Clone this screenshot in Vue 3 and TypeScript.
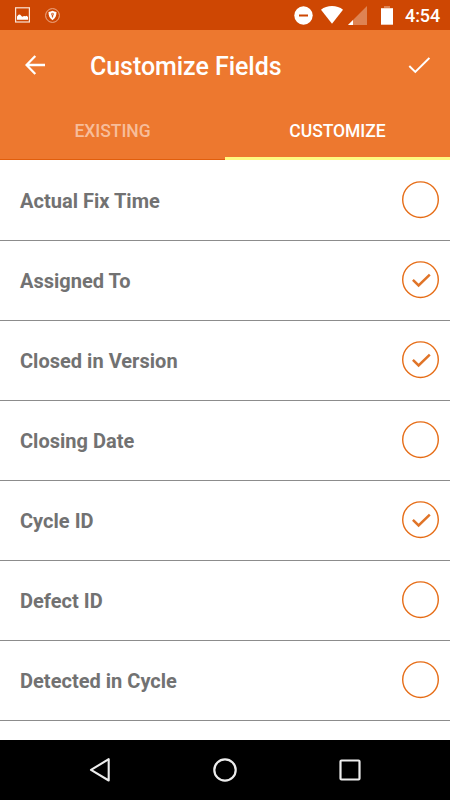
<script setup lang="ts">
import { ref } from 'vue'

interface Field {
  name: string
  checked: boolean
}

const tabs: string[] = ['EXISTING', 'CUSTOMIZE']
const activeTab = ref(1)

const fields = ref<Field[]>([
  { name: 'Actual Fix Time', checked: false },
  { name: 'Assigned To', checked: true },
  { name: 'Closed in Version', checked: true },
  { name: 'Closing Date', checked: false },
  { name: 'Cycle ID', checked: true },
  { name: 'Defect ID', checked: false },
  { name: 'Detected in Cycle', checked: false },
])

function toggle(field: Field): void {
  field.checked = !field.checked
}
</script>

<template>
  <div class="screen">
    <div class="status">
      <svg class="picture" width="15" height="16" viewBox="0 0 15 16">
        <rect x="0.6" y="0.8" width="13.8" height="14.2" fill="none" stroke="#fbe3d6" stroke-width="1.2" />
        <path d="M2 12.700V9.500l1.500-1.700 1.500-.2 2.200 2.200 1.800-.9 1.500.4 1.200-.6L13 10v2.700z" fill="#fff" />
      </svg>
      <svg class="shield" width="15" height="15" viewBox="0 0 15 15">
        <circle cx="7.500" cy="7.500" r="6.900" fill="none" stroke="#f0b79b" stroke-width="0.9" />
        <path d="M7.500 2.800c1.200.8 2.600 1.100 4 1.200 0 3.600-.9 6.300-4 8.200-3.100-1.900-4-4.600-4-8.200 1.400-.1 2.800-.4 4-1.200z" fill="#fff" />
        <path d="M7.500 4.700a1.400 1.400 0 0 1 .8 2.500L8 9.600H7L6.700 7.200a1.400 1.400 0 0 1 .8-2.500z" fill="#d05a22" />
        <circle cx="7.500" cy="6" r=".5" fill="#fff" />
      </svg>
      <span class="grow"></span>
      <svg class="dnd" width="19" height="19" viewBox="0 0 19 19">
        <circle cx="9.500" cy="9.500" r="9.200" fill="#fff" />
        <rect x="5" y="8.500" width="9" height="2" fill="#ce4703" />
      </svg>
      <svg class="wifi" width="22" height="18" viewBox="0 0 22 18">
        <path d="M0 3.700C3 1.300 6.800 0 11 0s8 1.300 11 3.700L11 17.700z" fill="#fff" />
      </svg>
      <svg class="signal" width="19" height="19" viewBox="0 0 19 19">
        <path d="M19 0v19H0z" fill="#de8353" />
        <path d="M5 14v5H0z" fill="#fff" />
      </svg>
      <svg class="battery" width="12" height="19" viewBox="0 0 12 19">
        <path d="M3 0h6v2h3v1H0V2h3z" fill="#de8353" />
        <rect y="2.300" width="12" height="16.400" fill="#fff" />
      </svg>
      <span class="clock">4:54</span>
    </div>

    <header class="toolbar">
      <svg class="back" width="20" height="20" viewBox="0 0 20 20">
        <path d="M10.300 1L1.500 10l8.800 9M1.500 10H20" fill="none" stroke="#fff" stroke-width="2.300" />
      </svg>
      <h1>Customize Fields</h1>
      <svg class="done" width="22" height="17" viewBox="0 0 22 17">
        <path d="M1.300 9l6 5.900L21.400 1" fill="none" stroke="#fff" stroke-width="2" />
      </svg>
    </header>

    <nav class="tabs">
      <button
        v-for="(tab, i) in tabs"
        :key="tab"
        class="tab"
        :class="{ active: activeTab === i }"
        @click="activeTab = i"
      ><span>{{ tab }}</span></button>
    </nav>

    <ul class="list">
      <li v-for="field in fields" :key="field.name" class="row" @click="toggle(field)">
        <span class="name">{{ field.name }}</span>
        <svg width="38" height="38" viewBox="0 0 38 38">
          <circle cx="18.500" cy="18.700" r="17.800" fill="none" stroke="#e66d17" stroke-width="1.400" />
          <path v-if="field.checked" d="M10.900 18.900l5.700 5.600L27.800 13.700" fill="none" stroke="#e07428" stroke-width="2.500" />
        </svg>
      </li>
    </ul>

    <footer class="navbar">
      <svg width="24" height="24" viewBox="0 0 24 24">
        <path d="M20.700 1.200v21.300L3 11.900z" fill="none" stroke="#ededed" stroke-width="2.100" stroke-linejoin="round" />
      </svg>
      <svg width="24" height="24" viewBox="0 0 24 24">
        <circle cx="12" cy="12" r="10.700" fill="none" stroke="#ededed" stroke-width="2.200" />
      </svg>
      <svg width="24" height="24" viewBox="0 0 24 24">
        <rect x="2.500" y="2.500" width="19" height="19" rx="1" fill="none" stroke="#ededed" stroke-width="2.200" />
      </svg>
    </footer>
  </div>
</template>

<style>
body {
  margin: 0;
  overflow: hidden;
}
</style>

<style scoped>
.screen {
  display: flex;
  flex-direction: column;
  width: 450px;
  height: 800px;
  overflow: hidden;
  background: #fff;
  font-family: Roboto, sans-serif;
}
svg {
  display: block;
  flex: none;
}
.status {
  display: flex;
  align-items: center;
  box-sizing: border-box;
  height: 30px;
  padding: 0 10px 0 15px;
  background: #ce4703;
  color: #fff;
}
.shield {
  margin-left: 15px;
}
.grow {
  flex: 1;
}
.wifi {
  margin-left: 8px;
}
.signal {
  margin-left: 5px;
}
.battery {
  margin-left: 14px;
}
.clock {
  width: 35px;
  margin-left: 12px;
  padding-top: 1px;
  font-size: 18px;
  font-weight: 500;
  letter-spacing: -0.1px;
  line-height: 30px;
  white-space: nowrap;
}
.toolbar {
  display: flex;
  align-items: center;
  box-sizing: border-box;
  height: 70px;
  padding: 0 20px 0 25px;
  background: #ed782f;
  color: #fff;
}
h1 {
  flex: 1;
  margin: 3px 0 0 45px;
  font-size: 25px;
  font-weight: 500;
  letter-spacing: -0.05px;
  line-height: 31px;
}
.tabs {
  display: flex;
  height: 60px;
  background: #ed782f;
}
.tab {
  display: flex;
  flex: 1;
  justify-content: center;
  align-items: flex-start;
  box-sizing: border-box;
  padding: 21px 0 0;
  border: 0;
  border-bottom: 1px solid #e15e0c;
  background: none;
  color: #f7bd9a;
  font: 500 17.500px/21px Roboto, sans-serif;
  letter-spacing: -0.04px;
}
.tab.active {
  border-bottom: 3px solid #fffa80;
  color: #fff;
}
.list {
  flex: 1;
  margin: 0;
  padding: 0;
  list-style: none;
  overflow: hidden;
}
.row {
  display: flex;
  align-items: center;
  justify-content: space-between;
  box-sizing: border-box;
  height: 80px;
  padding: 0 10px 0 20px;
}
.row:not(:first-child) {
  border-top: 1px solid #8c8c8c;
  padding-bottom: 1px;
}
.row:last-child {
  height: 81px;
  border-bottom: 1px solid #8c8c8c;
}
.name {
  padding-top: 1px;
  color: #727272;
  font-size: 20px;
  font-weight: 700;
  letter-spacing: 0.02px;
  line-height: 24px;
}
.navbar {
  display: flex;
  align-items: center;
  justify-content: center;
  gap: 101px;
  height: 60px;
  background: #000;
}
</style>
